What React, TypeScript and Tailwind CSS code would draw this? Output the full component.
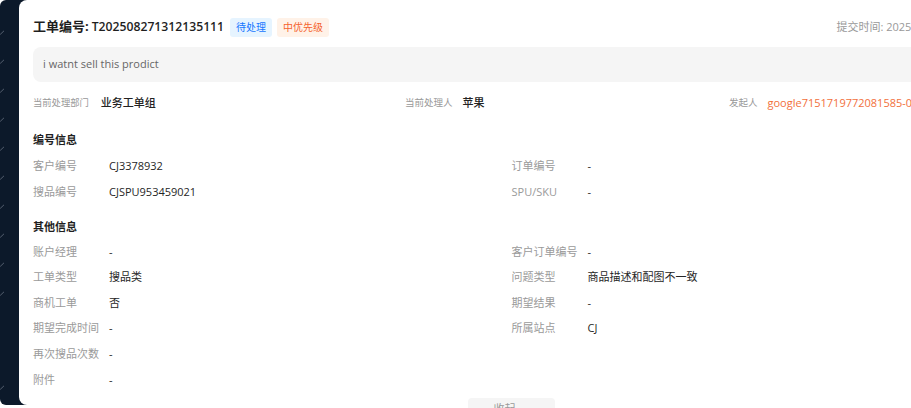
import React from "react";

const font = { fontFamily: '"Open Sans", "Noto Sans CJK SC", sans-serif' };

const numberInfo = [
  { label: "客户编号", value: "CJ3378932" },
  { label: "订单编号", value: "-" },
  { label: "搜品编号", value: "CJSPU953459021" },
  { label: "SPU/SKU", value: "-" },
];

const otherInfo = [
  { label: "账户经理", value: "-" },
  { label: "客户订单编号", value: "-" },
  { label: "工单类型", value: "搜品类" },
  { label: "问题类型", value: "商品描述和配图不一致" },
  { label: "商机工单", value: "否" },
  { label: "期望结果", value: "-" },
  { label: "期望完成时间", value: "-" },
  { label: "所属站点", value: "CJ" },
  { label: "再次搜品次数", value: "-" },
  null,
  { label: "附件", value: "-" },
  null,
];

function Tick() {
  return (
    <svg width="7" height="5" viewBox="0 0 8 6" className="-ml-[2px] shrink-0">
      <path d="M1 3.4 L2.8 5 L7 1" fill="none" stroke="#5c6676" strokeWidth="1.1" />
    </svg>
  );
}

function InfoRow({ label, value, h }: { label: string; value: string; h: string }) {
  return (
    <div className={`flex items-center ${h}`}>
      <span className="w-[76px] shrink-0 text-[11px] text-[#9a9a9a]">{label}</span>
      <span className="text-[11px] text-[#262626]">{value}</span>
    </div>
  );
}

export default function App() {
  return (
    <div className="w-[911px] h-[408px] overflow-hidden bg-white" style={font}>
      <div className="flex h-[405px] w-[1004px] rounded-l-[6px] bg-[#0c192a]">
        {/* sidebar peeking */}
        <div className="w-[19px] shrink-0 flex flex-col pt-[30px] pb-[15px]">
          <div className="flex flex-col gap-[24px]">
            {Array.from({ length: 10 }).map((_, i) => (
              <Tick key={i} />
            ))}
          </div>
          <div className="mt-auto">
            <Tick />
          </div>
        </div>

        {/* drawer card */}
        <div className="flex-1 rounded-l-[8px] bg-white px-[14px] pt-[17px]">
          <div className="flex items-center justify-between h-[20px]">
            <div className="flex items-center">
              <span className="text-[13px] font-bold text-[#1f1f1f]">工单编号:</span>
              <span className="ml-[3px] text-[12.2px] font-semibold text-[#1f1f1f]">T202508271312135111</span>
              <span className="ml-[6px] h-[19px] flex items-center px-[6px] rounded-[3px] bg-[#e6f4ff] text-[10px] text-[#1677ff]">
                待处理
              </span>
              <span className="ml-[5px] h-[19px] flex items-center px-[6px] rounded-[3px] bg-[#fff2e8] text-[10px] text-[#f5622d]">
                中优先级
              </span>
            </div>
            <span className="text-[11px] text-[#999]">提交时间: 2025-08-27 13:12:13</span>
          </div>

          <div className="mt-[10px] h-[35px] rounded-[8px] bg-[#f5f5f5] flex items-center px-[10px] text-[11px] text-[#666]">
            i watnt sell this prodict
          </div>

          <div className="mt-[13px] h-[16px] grid grid-cols-[372px_324px_1fr] items-center">
            <div className="flex items-center gap-[12px]">
              <span className="text-[9.3px] text-[#999]">当前处理部门</span>
              <span className="text-[11px] font-medium text-[#222]">业务工单组</span>
            </div>
            <div className="flex items-center gap-[10px]">
              <span className="text-[9.5px] text-[#999]">当前处理人</span>
              <span className="text-[11px] font-medium text-[#222]">苹果</span>
            </div>
            <div className="flex items-center gap-[10px] whitespace-nowrap">
              <span className="text-[9.5px] text-[#999]">发起人</span>
              <span className="text-[11px] text-[#f2703c]">google7151719772081585-0a9f2c</span>
            </div>
          </div>

          <div className="mt-[21px] h-[16px] flex items-center text-[11px] font-bold text-[#1f1f1f]">编号信息</div>
          <div className="mt-[5.5px] grid grid-cols-2">
            {numberInfo.map((it) => (
              <InfoRow key={it.label} label={it.label} value={it.value} h="h-[26px]" />
            ))}
          </div>

          <div className="mt-[13.5px] h-[16px] flex items-center text-[11px] font-bold text-[#1f1f1f]">其他信息</div>
          <div className="mt-[4px] grid grid-cols-2">
            {otherInfo.map((it, i) =>
              it ? (
                <InfoRow key={i} label={it.label} value={it.value} h="h-[25.6px]" />
              ) : (
                <div key={i} className="h-[25.6px]" />
              )
            )}
          </div>

          <div className="mt-[5px] mx-auto w-[87px] h-[24px] rounded-[4px] bg-[#f5f5f5] flex items-center justify-center gap-[6px] text-[11px] text-[#999]">
            收起
            <svg width="8" height="6" viewBox="0 0 8 6">
              <path d="M1 5 L4 2 L7 5" fill="none" stroke="#999" strokeWidth="1.2" />
            </svg>
          </div>
        </div>
      </div>
    </div>
  );
}
